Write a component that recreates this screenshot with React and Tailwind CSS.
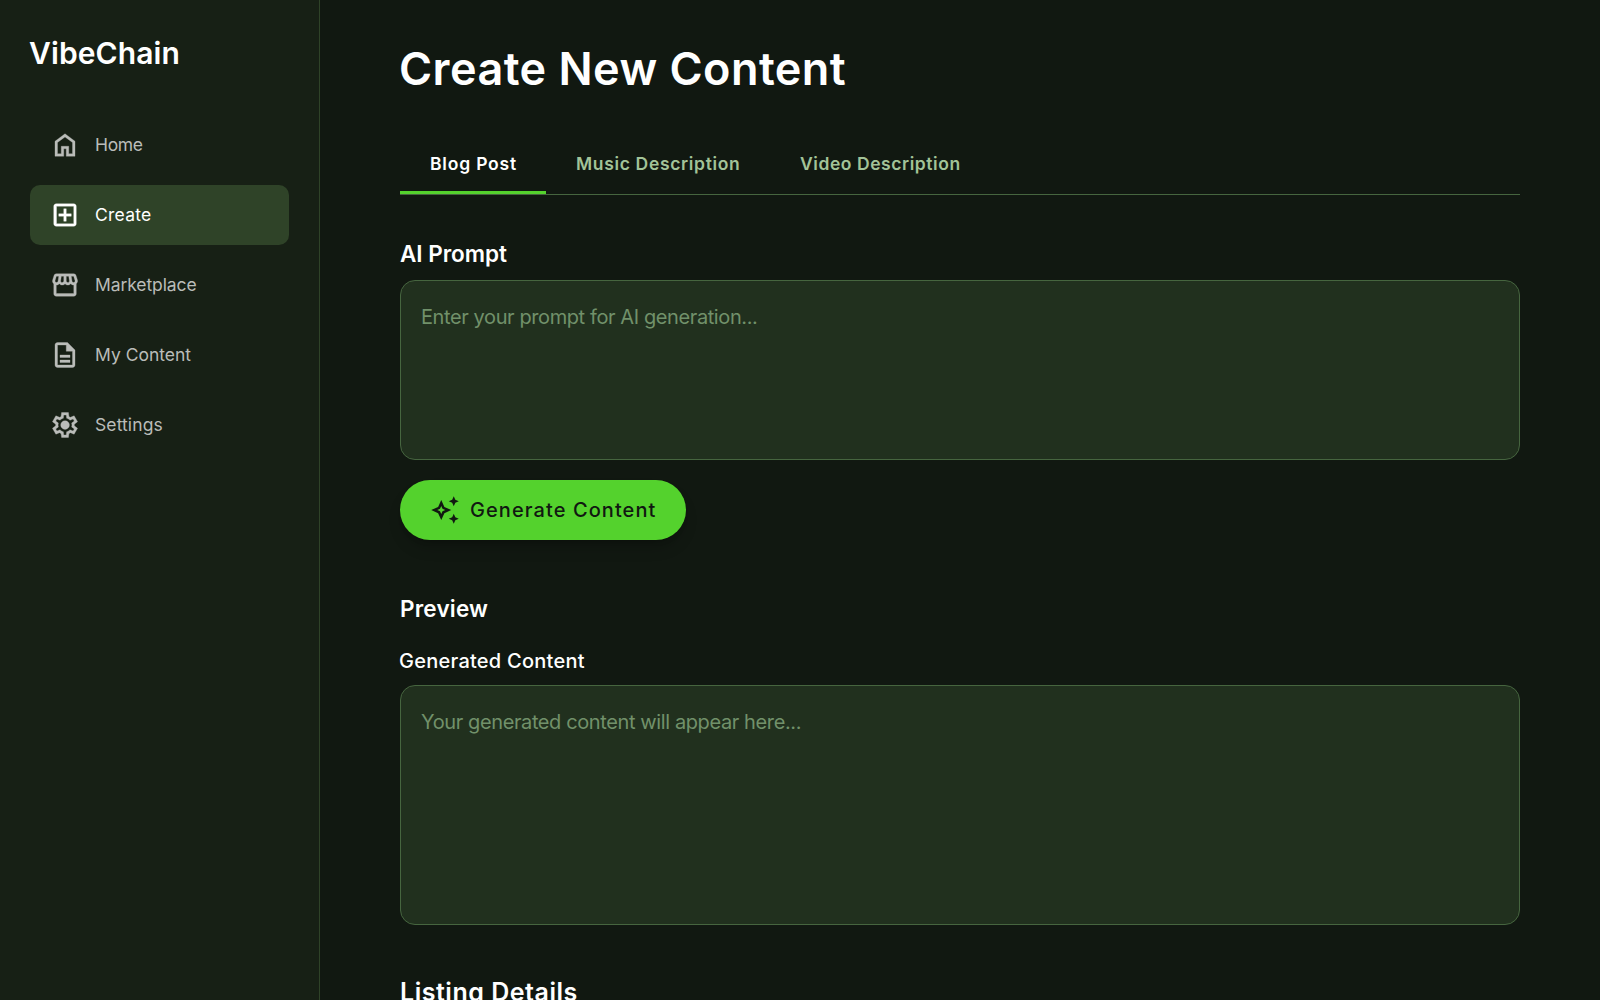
const ICONS = {
  home: 'M240-200h120v-240h240v240h120v-360L480-740 240-560v360Zm-80 80v-480l320-240 320 240v480H520v-240h-80v240H160Zm320-350Z',
  create:
    'M440-280h80v-160h160v-80H520v-160h-80v160H280v80h160v160ZM200-120q-33 0-56.5-23.5T120-200v-560q0-33 23.5-56.5T200-840h560q33 0 56.5 23.5T840-760v560q0 33-23.5 56.5T760-120H200Zm0-80h560v-560H200v560Zm0-560v560-560Z',
  market:
    'M841-518v318q0 33-23.5 56.5T761-120H201q-33 0-56.5-23.5T121-200v-318q-23-21-35.5-54t-.5-72l42-136q8-26 28.5-43t47.5-17h556q27 0 47 16.5t29 43.5l42 136q12 39-.5 71T841-518Zm-272-42q27 0 41-18.5t11-41.5l-22-140h-78v148q0 21 14 36.5t34 15.5Zm-180 0q23 0 37.5-15.5T441-612v-148h-78l-22 140q-4 24 10.5 42t37.5 18Zm-178 0q18 0 31.5-13t16.5-33l22-154h-78l-40 134q-6 20 6.5 43t41.5 23Zm540 0q29 0 42-23t6-43l-42-134h-76l22 154q3 20 16.5 33t31.5 13ZM201-200h560v-282q-5 2-6.5 2H751q-27 0-47.5-9T663-518q-18 18-41 28t-49 10q-27 0-50.5-10T481-518q-17 18-39.5 28T393-480q-29 0-52.5-10T299-518q-21 21-41.5 29.5T211-480h-4.5q-2.5 0-5.5-2v282Zm560 0H201h560Z',
  doc: 'M320-240h320v-80H320v80Zm0-160h320v-80H320v80ZM240-80q-33 0-56.5-23.5T160-160v-640q0-33 23.5-56.5T240-880h320l240 240v480q0 33-23.5 56.5T720-80H240Zm280-520v-200H240v640h480v-440H520Z',
  settings:
    'm370-80-16-128q-13-5-24.5-12T307-235l-119 50L78-375l103-78q-1-7-1-13.5v-27q0-6.5 1-13.5L78-585l110-190 119 50q11-8 23-15t24-12l16-128h220l16 128q13 5 24.5 12t22.5 15l119-50 110 190-103 78q1 7 1 13.5v27q0 6.5-2 13.5l103 78-110 190-118-50q-11 8-23 15t-24 12L590-80H370Zm70-80h79l14-106q31-8 57.5-23.5T639-327l99 41 39-68-86-65q5-14 7-29.5t2-31.5q0-16-2-31.5t-7-29.5l86-65-39-68-99 42q-22-23-48.5-38.5T533-694l-13-106h-79l-14 106q-31 8-57.5 23.5T321-633l-99-41-39 68 86 64q-5 15-7 30t-2 32q0 16 2 31t7 30l-86 65 39 68 99-42q22 23 48.5 38.5T427-266l13 106Zm42-180q58 0 99-41t41-99q0-58-41-99t-99-41q-59 0-99.5 41T342-480q0 58 40.5 99t99.5 41Z',
};

const NAV = [
  { label: 'Home', icon: 'home', tracking: 'tracking-[-0.35px]' },
  { label: 'Create', icon: 'create', tracking: 'tracking-[0.25px]', active: true },
  { label: 'Marketplace', icon: 'market', tracking: 'tracking-[-0.1px]' },
  { label: 'My Content', icon: 'doc', tracking: 'tracking-[0px]' },
  { label: 'Settings', icon: 'settings', tracking: 'tracking-[0.1px]' },
];

function NavItem({ label, icon, tracking, active }) {
  return (
    <a
      className={`flex h-[60px] items-center gap-[15px] rounded-[10px] px-5 text-[17.5px] ${
        active ? 'bg-[#2f4328] text-white' : 'text-[#babcb9]'
      }`}
    >
      <svg viewBox="0 -960 960 960" className="size-[30px] shrink-0 fill-current stroke-current stroke-[10]">
        <path d={ICONS[icon]} />
      </svg>
      <span className={tracking}>{label}</span>
    </a>
  );
}

export default function App() {
  return (
    <div className="flex h-screen overflow-hidden bg-[#111811] font-['Inter',sans-serif] text-white">
      <aside className="flex w-80 shrink-0 flex-col border-r border-[#2f4328] bg-[#172015] p-[30px]">
        <h1 className="-ml-px pt-px text-[30px] leading-[45px] font-semibold tracking-[0.1px]">VibeChain</h1>
        <nav className="mt-[39px] flex flex-col gap-2.5">
          {NAV.map((item) => (
            <NavItem key={item.label} {...item} />
          ))}
        </nav>
      </aside>

      <main className="flex-1 overflow-hidden px-20 pt-10">
        <h2 className="-ml-px text-[45px] leading-[57px] font-semibold tracking-[0.45px]">Create New Content</h2>

        <div className="mt-10 flex h-[58px] border-b border-[#46653f] text-[17.5px] leading-[53px] font-semibold text-[#a2c398]">
          <button className="flex w-[146px] border-b-[3px] border-[#54d22d] pl-[30px] tracking-[0.8px] text-white">
            Blog Post
          </button>
          <button className="flex w-[224px] border-b-[3px] border-transparent pl-[30px] tracking-[0.66px]">
            Music Description
          </button>
          <button className="flex border-b-[3px] border-transparent pl-[30px] tracking-[0.56px]">
            Video Description
          </button>
        </div>

        <section className="mt-10">
          <h3 className="pt-px text-[22.5px] leading-9 font-semibold tracking-[-0.03px]">AI Prompt</h3>
          <textarea
            className="mt-2 block h-[180px] w-full resize-none rounded-[15px] border border-[#46653f] bg-[#21301e] px-5 pt-[21px] text-[20px] leading-[30px] tracking-[-0.4px] placeholder:text-[#71916a] placeholder:opacity-100"
            placeholder="Enter your prompt for AI generation..."
          />
          <button className="mt-5 flex h-[60px] w-[286px] items-center gap-[10px] rounded-full bg-[#54d22d] pl-[30px] text-[20px] font-medium tracking-[1.08px] whitespace-nowrap text-[#111811] shadow-lg shadow-black/20">
            <svg viewBox="0 0 24 24" className="size-[30px] shrink-0 fill-current">
              <path d="M19 9l1.25-2.75L23 5l-2.75-1.25L19 1l-1.25 2.75L15 5l2.75 1.25L19 9zm0 6l-1.25 2.75L15 19l2.75 1.25L19 23l1.25-2.75L23 19l-2.75-1.25L19 15zm-7.5-5.5L9 4 6.5 9.5 1 12l5.5 2.5L9 20l2.5-5.5L17 12l-5.5-2.5zm-1.51 3.49L9 15.17l-.99-2.18L5.83 12l2.18-.99L9 8.83l.99 2.18 2.18.99-2.18.99z" />
            </svg>
            Generate Content
          </button>
        </section>

        <section className="mt-[50px]">
          <h3 className="text-[22.5px] leading-[37px] font-semibold tracking-[0.2px]">Preview</h3>
          <h4 className="mt-[19px] -ml-px text-[20px] leading-[30px] font-medium tracking-[0.25px]">
            Generated Content
          </h4>
          <textarea
            className="mt-[9px] block h-[240px] w-full resize-none rounded-[15px] border border-[#46653f] bg-[#21301e] px-5 pt-[21px] text-[20px] leading-[30px] tracking-[-0.39px] placeholder:text-[#71916a] placeholder:opacity-100"
            placeholder="Your generated content will appear here..."
          />
        </section>

        <section className="mt-[49px]">
          <h3 className="text-[25px] leading-9 font-semibold tracking-[0.52px]">Listing Details</h3>
        </section>
      </main>
    </div>
  );
}
